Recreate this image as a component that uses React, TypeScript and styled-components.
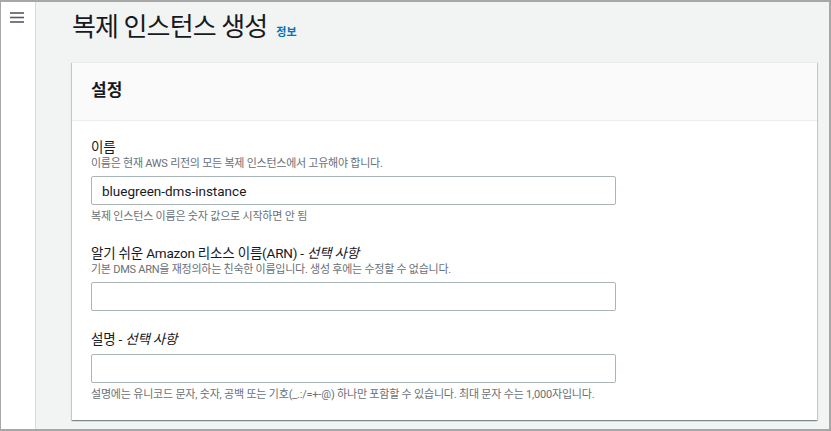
import React from "react";
import styled, { createGlobalStyle } from "styled-components";

const Global = createGlobalStyle`
  html, body { margin: 0; padding: 0; background: #ffffff; }
  * { box-sizing: border-box; }
  body { font-family: Roboto, "Noto Sans CJK KR", sans-serif; color: #16191f; }
`;

const Frame = styled.div`
  width: 831px;
  height: 431px;
  border: 1px solid #a7a7a7;
  border-top-width: 2px;
  border-right-width: 2px;
  border-bottom-width: 2px;
  display: flex;
  overflow: hidden;
`;

const Sidebar = styled.nav`
  width: 35px;
  flex: none;
  background: #ffffff;
  border-right: 1px solid #d5dbdb;
  display: flex;
  justify-content: center;
  padding-top: 10px;
  padding-right: 3px;
`;

const Main = styled.main`
  flex: 1;
  background: #f2f3f3;
  padding: 0 12px 0 36px;
  display: flex;
  flex-direction: column;
`;

const TitleRow = styled.div`
  height: 60px;
  display: flex;
  align-items: center;
  gap: 9px;
  padding-bottom: 10px;
`;

const Title = styled.h1`
  margin: 0;
  font-size: 26px;
  line-height: 32px;
  font-weight: 400;
  color: #16191f;
  letter-spacing: -0.9px;
`;

const InfoLink = styled.a`
  font-size: 11px;
  font-weight: 700;
  color: #0073bb;
  text-decoration: none;
  margin-top: 8px;
`;

const Card = styled.section`
  background: #ffffff;
  border-top: 1px solid #eaeded;
  box-shadow: 0 1px 1px 0 rgba(0, 28, 36, 0.3), 1px 1px 1px 0 rgba(0, 28, 36, 0.15),
    -1px 1px 1px 0 rgba(0, 28, 36, 0.15);
  display: flex;
  flex-direction: column;
`;

const CardHeader = styled.header`
  background: #fafafa;
  border-bottom: 1px solid #eaeded;
  height: 58px;
  padding: 16px 19px 0;
`;

const CardTitle = styled.h2`
  margin: 0;
  font-size: 17px;
  line-height: 22px;
  font-weight: 700;
  color: #16191f;
`;

const CardBody = styled.div`
  padding: 17px 19px 17px;
  display: flex;
  flex-direction: column;
  gap: 19px;
`;

const Field = styled.div`
  display: flex;
  flex-direction: column;
`;

const Label = styled.label`
  font-size: 13.5px;
  line-height: 18px;
  color: #16191f;
  letter-spacing: -0.2px;
`;

const Optional = styled.i`
  font-style: italic;
`;

const Description = styled.div`
  font-size: 11px;
  line-height: 16px;
  color: #687078;
  margin-bottom: 4px;
  letter-spacing: -0.25px;
`;

const Constraint = styled.div`
  font-size: 11px;
  line-height: 16px;
  color: #687078;
  margin-top: 4px;
  letter-spacing: -0.2px;
`;

const Input = styled.input<{ $gapTop?: number }>`
  width: 525px;
  height: 29px;
  margin-top: ${(p) => p.$gapTop ?? 0}px;
  border: 1px solid #aab7b8;
  border-radius: 2px;
  padding: 0 10px;
  font-family: Roboto, "Noto Sans CJK KR", sans-serif;
  font-size: 13.5px;
  color: #16191f;
  background: #ffffff;
  outline: none;
`;

const Menu = () => (
  <svg width="14" height="11" viewBox="0 0 14 11">
    <g stroke="#545b64" strokeWidth="1.6">
      <line x1="0" y1="1" x2="14" y2="1" />
      <line x1="0" y1="5.5" x2="14" y2="5.5" />
      <line x1="0" y1="10" x2="14" y2="10" />
    </g>
  </svg>
);

export default function App() {
  return (
    <>
      <Global />
      <Frame>
        <Sidebar>
          <Menu />
        </Sidebar>
        <Main>
          <TitleRow>
            <Title>복제 인스턴스 생성</Title>
            <InfoLink href="#">정보</InfoLink>
          </TitleRow>
          <Card>
            <CardHeader>
              <CardTitle>설정</CardTitle>
            </CardHeader>
            <CardBody>
              <Field>
                <Label>이름</Label>
                <Description>이름은 현재 AWS 리전의 모든 복제 인스턴스에서 고유해야 합니다.</Description>
                <Input defaultValue="bluegreen-dms-instance" />
                <Constraint>복제 인스턴스 이름은 숫자 값으로 시작하면 안 됨</Constraint>
              </Field>
              <Field>
                <Label>
                  알기 쉬운 Amazon 리소스 이름(ARN) - <Optional>선택 사항</Optional>
                </Label>
                <Description>기본 DMS ARN을 재정의하는 친숙한 이름입니다. 생성 후에는 수정할 수 없습니다.</Description>
                <Input />
              </Field>
              <Field>
                <Label>
                  설명 - <Optional>선택 사항</Optional>
                </Label>
                <Input $gapTop={6} />
                <Constraint>
                  설명에는 유니코드 문자, 숫자, 공백 또는 기호(_.:/=+-@) 하나만 포함할 수 있습니다. 최대 문자 수는 1,000자입니다.
                </Constraint>
              </Field>
            </CardBody>
          </Card>
        </Main>
      </Frame>
    </>
  );
}
